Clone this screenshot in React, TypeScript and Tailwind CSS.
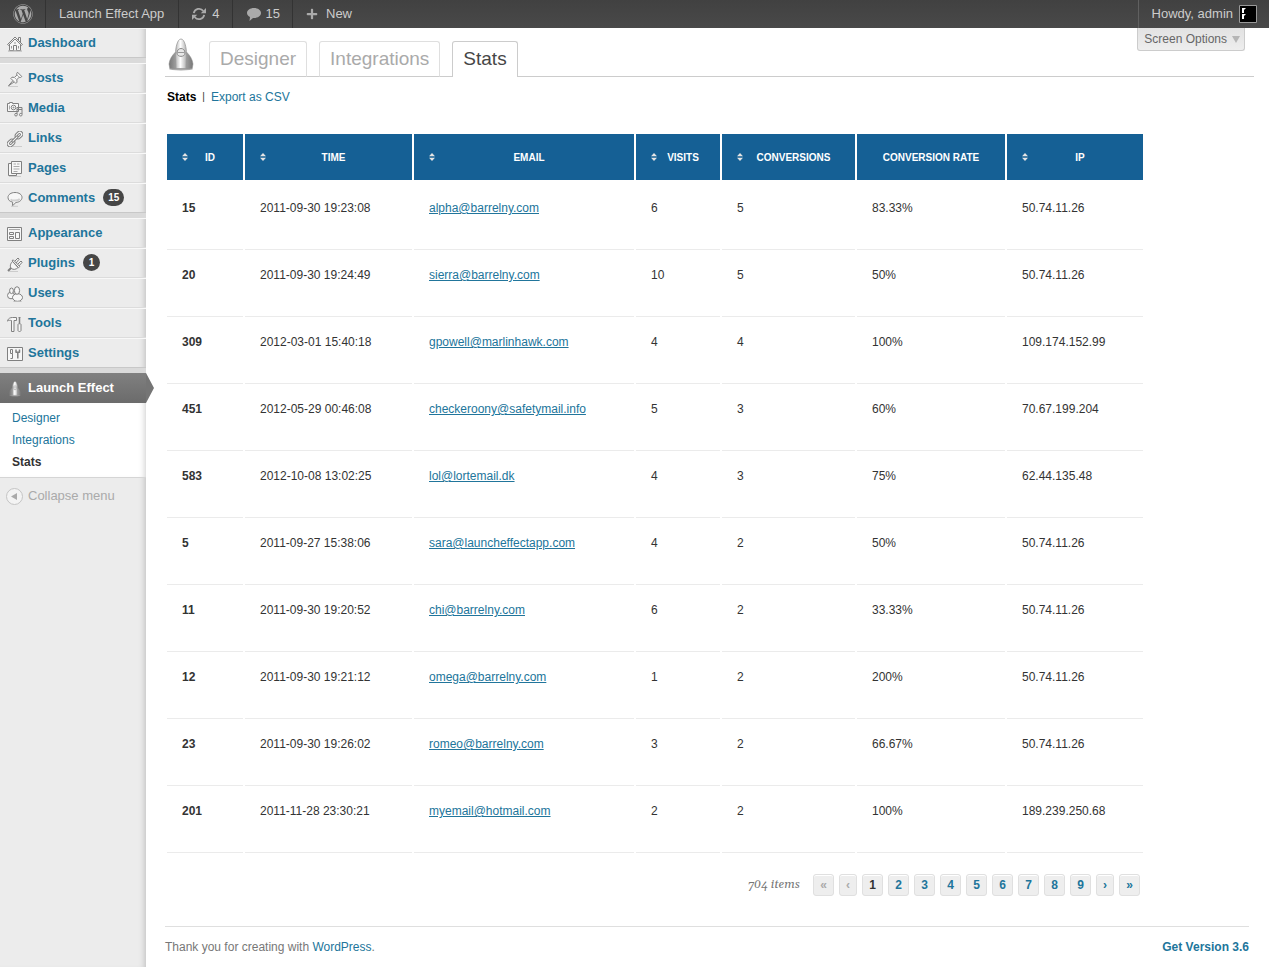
import React from "react";
import { FaWordpress, FaPlus } from "react-icons/fa";

type IconProps = { children: React.ReactNode };

function Glyph({ children }: IconProps) {
  return (
    <svg viewBox="0 0 16 16" className="size-4 shrink-0" fill="#f7f7f7" stroke="#808080" strokeWidth="1" strokeLinejoin="round" aria-hidden="true">
      {children}
    </svg>
  );
}

const icons = {
  dashboard: (
    <Glyph>
      <path d="M2.500 8v6.500h11V8L8 2.500z" />
      <path d="M11.500 4V1.500h2V6" />
      <path d="M.5 8.500 8 1l7.500 7.500-1 .8L8 3 1.500 9.300z" />
      <path d="M6.500 14.500v-5h3v5" />
      <path d="M4.500 10v2.500M11.500 10v2.500M7 7h2" stroke="#999" />
      <path d="M1 15h14" stroke="#aaa" />
    </Glyph>
  ),
  posts: (
    <Glyph>
      <path d="m6 9.500-4.500 5.300L7 11" />
      <path d="m10.500 1.200 4.300 4.300-1.300 1-1.500-.2-2.200 2.500.2 2.400-1.200 1.200-5-5 1.200-1.200 2.400.2 2.500-2.200-.2-1.500z" />
      <path d="m9.800 3.800 2.500 2.500M7.200 6.300l2.600 2.500" stroke="#aaa" />
      <path d="M1 15.500h10" stroke="#ccc" />
    </Glyph>
  ),
  media: (
    <Glyph>
      <path d="M.5 2.500h2v-1h3v1h6v8H.5z" />
      <circle cx="6.500" cy="6.500" r="2.300" />
      <circle cx="6.500" cy="6.500" r=".5" />
      <path d="M2.500 4.500v4" stroke="#aaa" />
      <path d="M10 13V6.500h5V13M10 8.500h5" fill="none" />
      <circle cx="9" cy="13.700" r="1.300" />
      <circle cx="13.800" cy="13.700" r="1.300" />
    </Glyph>
  ),
  links: (
    <Glyph>
      <g transform="rotate(-45 8 8)">
        <rect x="-1.800" y="5" width="8.300" height="6" rx="3" />
        <rect x=".6" y="7" width="3.500" height="2" rx="1" fill="#ececec" />
        <rect x="9.500" y="5" width="8.300" height="6" rx="3" />
        <rect x="11.900" y="7" width="3.500" height="2" rx="1" fill="#ececec" />
        <rect x="4" y="7" width="8" height="2" rx="1" />
      </g>
      <path d="M6 15.500h9" stroke="#ccc" />
    </Glyph>
  ),
  pages: (
    <Glyph>
      <path d="M1.500 2.500h8v12h-8z" />
      <path d="M4.500 .5h10v12h-10z" />
      <path d="M6.500 3h2.500M10 3h2.500M6.500 5.500h6M6.500 8h6M6.500 10.500h4" stroke="#aaa" />
      <path d="M2 15.500h12" stroke="#ccc" />
    </Glyph>
  ),
  comments: (
    <Glyph>
      <path d="M8 1.500c4.200 0 7 2.200 7 4.900 0 2.900-2.800 4.900-6 5L5.500 14.800l.2-3.700C2.700 10.600 1 8.900 1 6.400c0-2.700 2.800-4.900 7-4.900z" />
      <path d="M3.500 8.500c2 1.500 7 1.500 9.300-.5" stroke="#d0d0d0" fill="none" strokeWidth="2" />
      <path d="M4 15.300h7" stroke="#ccc" />
    </Glyph>
  ),
  appearance: (
    <Glyph>
      <path d="M.5 1.500h14v13H.5z" />
      <path d="M2 3.500h11" stroke="#aaa" />
      <path d="M2.500 6.500h4v2h-4zM2.500 10.500h4v2h-4zM8.500 6.500h4v6h-4z" />
    </Glyph>
  ),
  plugins: (
    <Glyph>
      <path d="M4.500 11.500 1 15" fill="none" strokeWidth="2" />
      <path d="M7.500 5.500 11 2l1.200 1.200L9 7zM10.500 8.500 14 5l1.200 1.200L12 10z" />
      <path d="M5.500 5.500 11 11.500c-2 2.200-5 2.500-6.700.8S3.300 7.700 5.500 5.500z" />
      <path d="m5 4.800 1.200-1 6.600 6.700-1.200 1.200z" />
      <path d="M2 15.500h9" stroke="#ccc" />
    </Glyph>
  ),
  users: (
    <Glyph>
      <ellipse cx="4" cy="9.500" rx="3.500" ry="3.300" />
      <ellipse cx="4.500" cy="4.800" rx="1.900" ry="2.800" />
      <ellipse cx="10.500" cy="11.500" rx="5" ry="3.800" />
      <ellipse cx="10" cy="4.500" rx="2.600" ry="3.800" />
      <path d="M6.500 15.500h8" stroke="#bbb" />
    </Glyph>
  ),
  tools: (
    <Glyph>
      <path d="M.5 4.500c1-2 2.500-3 5-3h4v3h-2.500v11H4.500v-11c-1.500-.3-3-.3-4 .6z" />
      <path d="M12.500 2v6" strokeWidth="1.500" />
      <path d="M11 8.500c0-1 3-1 3 0v6c0 1.300-3 1.300-3 0zM11.500 1.500h2" />
    </Glyph>
  ),
  settings: (
    <Glyph>
      <path d="M.5 1.500h15v13H.5z" />
      <path d="M3.500 3.500h2v4h-2zM3.500 12.500h2v-5" />
      <path d="M9 3.500v2.700h3.500V3.500M10.800 6.500v6" fill="none" strokeWidth="1.500" />
    </Glyph>
  ),
};

function Rocket({ className }: { className: string }) {
  return (
    <svg viewBox="0 0 26 34" className={className} aria-hidden="true">
      <defs>
        <linearGradient id="hull" x1="0" x2="1" y1="0" y2="0">
          <stop offset="0" stopColor="#b5b5b5" />
          <stop offset=".45" stopColor="#fff" />
          <stop offset="1" stopColor="#b0b0b0" />
        </linearGradient>
        <linearGradient id="fin" x1="0" x2="1" y1="0" y2="0">
          <stop offset="0" stopColor="#777" />
          <stop offset=".5" stopColor="#bbb" />
          <stop offset="1" stopColor="#777" />
        </linearGradient>
      </defs>
      <ellipse cx="13" cy="31" rx="12" ry="1.500" fill="#aaa" />
      <path d="M7.500 14C4.500 17 1.500 21 1 26l.8 4.500h6.700zM18.500 14c3 3 6 7 6.500 12l-.8 4.500h-6.700z" fill="url(#fin)" stroke="#888" strokeWidth=".5" />
      <path d="M13 1c3.700 0 5.500 9 5.500 15l-.5 14.500H8L7.500 16C7.500 10 9.300 1 13 1z" fill="url(#hull)" stroke="#999" strokeWidth=".8" />
      <path d="M9 15c0-6 8-6 8 0 0 4.500-8 4.500-8 0z" fill="#e8e8e8" stroke="#888" />
      <path d="M9.500 14.500h7" stroke="#999" />
    </svg>
  );
}

function Badge({ count }: { count: number }) {
  return (
    <span className="ml-[3px] flex h-[17px] min-w-[17px] items-center justify-center rounded-full bg-[#464646] px-[5px] text-[10px] font-bold text-white">
      {count}
    </span>
  );
}

type Entry = { icon: keyof typeof icons; label: string; count?: number };

const menuGroups: Entry[][] = [
  [{ icon: "dashboard", label: "Dashboard" }],
  [
    { icon: "posts", label: "Posts" },
    { icon: "media", label: "Media" },
    { icon: "links", label: "Links" },
    { icon: "pages", label: "Pages" },
    { icon: "comments", label: "Comments", count: 15 },
  ],
  [
    { icon: "appearance", label: "Appearance" },
    { icon: "plugins", label: "Plugins", count: 1 },
    { icon: "users", label: "Users" },
    { icon: "tools", label: "Tools" },
    { icon: "settings", label: "Settings" },
  ],
];

const rows = [
  ["15", "2011-09-30 19:23:08", "alpha@barrelny.com", "6", "5", "83.33%", "50.74.11.26"],
  ["20", "2011-09-30 19:24:49", "sierra@barrelny.com", "10", "5", "50%", "50.74.11.26"],
  ["309", "2012-03-01 15:40:18", "gpowell@marlinhawk.com", "4", "4", "100%", "109.174.152.99"],
  ["451", "2012-05-29 00:46:08", "checkeroony@safetymail.info", "5", "3", "60%", "70.67.199.204"],
  ["583", "2012-10-08 13:02:25", "lol@lortemail.dk", "4", "3", "75%", "62.44.135.48"],
  ["5", "2011-09-27 15:38:06", "sara@launcheffectapp.com", "4", "2", "50%", "50.74.11.26"],
  ["11", "2011-09-30 19:20:52", "chi@barrelny.com", "6", "2", "33.33%", "50.74.11.26"],
  ["12", "2011-09-30 19:21:12", "omega@barrelny.com", "1", "2", "200%", "50.74.11.26"],
  ["23", "2011-09-30 19:26:02", "romeo@barrelny.com", "3", "2", "66.67%", "50.74.11.26"],
  ["201", "2011-11-28 23:30:21", "myemail@hotmail.com", "2", "2", "100%", "189.239.250.68"],
];

const columns = [
  { label: "ID", width: "w-[76px]", sortable: true },
  { label: "TIME", width: "w-[167px]", sortable: true },
  { label: "EMAIL", width: "w-[220px]", sortable: true },
  { label: "VISITS", width: "w-[84px]", sortable: true },
  { label: "CONVERSIONS", width: "w-[133px]", sortable: true },
  { label: "CONVERSION RATE", width: "w-[148px]", sortable: false },
  { label: "IP", width: "w-[136px]", sortable: true },
];

const tabs = ["Designer", "Integrations", "Stats"];

function AdminBar() {
  return (
    <header className="flex h-7 items-stretch bg-linear-to-b from-[#414141] to-[#494949] text-[13px] text-[#ccc]">
      <a href="#about" aria-label="About WordPress" className="flex w-[46px] items-center justify-center border-r border-[#333]">
        <FaWordpress className="size-5 text-[#aaa]" />
      </a>
      <a href="#site" className="flex items-center border-r border-[#333] pr-3.5 pl-[13px]">Launch Effect App</a>
      <a href="#updates" className="flex items-center gap-[5px] border-r border-[#333] px-3">
        <svg viewBox="0 0 16 14" className="h-3.5 w-4" aria-hidden="true">
          <path d="M2.800 6.200A5.300 5.300 0 0 1 12.300 4M13.200 7.800A5.300 5.300 0 0 1 3.700 10" fill="none" stroke="#aaa" strokeWidth="1.800" />
          <path d="M15 1v5.200H9.800zM1 13V7.800h5.200z" fill="#aaa" />
        </svg>
        4
      </a>
      <a href="#comments" className="flex items-center gap-[5px] border-r border-[#333] pr-3 pl-3.5">
        <svg viewBox="0 0 14 13" className="h-[13px] w-3.5 fill-[#aaa]" aria-hidden="true">
          <path d="M7 0c4 0 7 2.200 7 5s-3 5-7 5l-1 0-3.500 3 .5-4C1.200 8 0 6.700 0 5c0-2.800 3-5 7-5z" />
        </svg>
        15
      </a>
      <a href="#new" className="flex items-center gap-2 px-[13px]">
        <FaPlus className="size-3 text-[#aaa]" />
        New
      </a>
      <a href="#profile" className="ml-auto flex items-center gap-1.5 border-l border-[#606060] pr-3 pl-[13px]">
        Howdy, admin
        <svg viewBox="0 0 18 18" className="size-[18px]" aria-hidden="true">
          <path d="M.5.500h17v17H.5z" fill="#000" stroke="#999" />
          <path d="M3 3h4L5 5v3H3zM3 9h4l-2 2v3H3z" fill="#fff" />
        </svg>
      </a>
    </header>
  );
}

function Sidebar() {
  return (
    <nav aria-label="Main menu" className="w-[146px] shrink-0 bg-[#ececec] shadow-[inset_-6px_0_6px_-5px_#bbb]">
      {menuGroups.map((group) => (
        <ul key={group[0].label} className="border-b-[5px] border-[#dadada]">
          {group.map((item) => (
            <li key={item.label} className="border-b border-[#dcdcdc] shadow-[inset_0_1px_0_#f8f8f8] last:border-[#c8c8c8]">
              <a href={"#" + item.icon} className="flex h-[29px] items-center gap-[5px] pl-[7px] text-[13px] font-bold text-[#21759b]">
                <span className="pt-0.5">{icons[item.icon]}</span>
                {item.label}
                {item.count && <Badge count={item.count} />}
              </a>
            </li>
          ))}
        </ul>
      ))}
      <a href="#launch" aria-current="true" className="relative flex h-[30px] items-center gap-[5px] bg-linear-to-b from-[#808080] to-[#6b6b6b] pl-[7px] text-[13px] font-bold text-white">
        <span className="pt-0.5"><Rocket className="size-4" /></span>
        Launch Effect
        <svg viewBox="0 0 8 30" className="absolute top-0 left-full h-[30px] w-2 fill-[#757575]" aria-hidden="true">
          <path d="M0 0 8 15 0 30z" />
        </svg>
      </a>
      <ul className="border-b border-[#d5d5d5] bg-white py-1 pl-3 text-xs leading-[22px] text-[#21759b] shadow-[inset_-6px_0_6px_-5px_#ccc]">
        <li><a href="#designer">Designer</a></li>
        <li><a href="#integrations">Integrations</a></li>
        <li><a href="#stats" className="font-bold text-[#333]">Stats</a></li>
      </ul>
      <button type="button" className="flex h-9 items-center gap-[5px] pl-1.5 text-[13px] text-[#aaa]">
        <svg viewBox="0 0 17 17" className="size-[17px]" aria-hidden="true">
          <circle cx="8.500" cy="8.500" r="8" fill="#f3f3f3" stroke="#c4c4c4" />
          <path d="M11 5v7L5 8.500z" fill="#aaa" />
        </svg>
        Collapse menu
      </button>
    </nav>
  );
}

function PageHeader() {
  return (
    <div className="flex h-[49px] items-end border-b border-[#ccc]">
      <Rocket className="mb-1 ml-[3px] h-[34px] w-[26px]" />
      <div className="ml-[15px] flex gap-3 text-[19px]">
        {tabs.map((tab) => (
          <a
            key={tab}
            href={"#" + tab}
            className={
              tab === "Stats"
                ? "-mb-px flex h-9 items-center rounded-t-[3px] border border-b-0 border-[#ccc] bg-white px-2.5 text-[#464646]"
                : "-mb-px flex h-9 items-center rounded-t-[3px] border border-[#dfdfdf] border-b-[#ccc] px-2.5 text-[#aaa]"
            }
          >
            {tab}
          </a>
        ))}
      </div>
      <button type="button" className="mr-[9px] ml-auto flex h-[23px] items-center gap-[5px] self-start rounded-b-[3px] border border-t-0 border-[#ccc] bg-linear-to-b from-[#e2e2e2] to-[#eee] pr-1 pl-1.5 text-xs text-[#666]">
        Screen Options
        <svg viewBox="0 0 8 7" className="h-[7px] w-2 fill-[#b5b5b5]" aria-hidden="true">
          <path d="M0 0h8L4 7z" />
        </svg>
      </button>
    </div>
  );
}

function StatsTable() {
  return (
    <table className="mt-[27px] w-full max-w-[980px] table-fixed border-separate border-spacing-0.5 text-left text-xs leading-4 text-[#333]">
      <thead>
        <tr>
          {columns.map((col) => (
            <th key={col.label} scope="col" className={col.width + " border-b-[3px] border-white bg-[#156095] p-0 text-[10px] font-bold text-white"}>
              {col.sortable ? (
                <button type="button" className="flex h-[46px] w-full items-center px-[15px]">
                  <svg viewBox="0 0 6 8" className="-mr-1 h-2 w-1.5 shrink-0 fill-[#e4e4e4]" aria-hidden="true">
                    <path d="M0 3.300 3 0l3 3.300zM0 4.700h6L3 8z" />
                  </svg>
                  <span className="flex-1 pt-px pl-2 text-center">{col.label}</span>
                </button>
              ) : (
                <span className="flex h-[46px] items-center justify-center pt-px whitespace-nowrap">{col.label}</span>
              )}
            </th>
          ))}
        </tr>
      </thead>
      <tbody>
        {rows.map((row) => (
          <tr key={row[0]}>
            {row.map((cell, i) => (
              <td key={columns[i].label} className="h-[65px] border-b border-[#ebebeb] px-[15px] pt-[15px] align-top">
                {i === 0 ? (
                  <strong>{cell}</strong>
                ) : i === 2 ? (
                  <a href={"mailto:" + cell} className="text-[#21759b] underline">{cell}</a>
                ) : (
                  cell
                )}
              </td>
            ))}
          </tr>
        ))}
      </tbody>
    </table>
  );
}

function Pager() {
  const pages = ["«", "‹", "1", "2", "3", "4", "5", "6", "7", "8", "9", "›", "»"];
  return (
    <div className="mt-[19px] flex max-w-[980px] items-center justify-end gap-[5px] pr-[5px] text-xs">
      <span className="mr-2 font-['Gelasio','Georgia','Liberation_Serif',serif] text-xs text-[#777] italic">704 items</span>
      {pages.map((page, i) => (
        <button
          key={page}
          type="button"
          disabled={i < 2}
          className={
            "flex h-[22px] items-center justify-center rounded-[3px] border border-[#e0e0e0] bg-[#eee] font-bold shadow-[inset_0_1px_0_#fff] " +
            (page === "‹" || page === "›" ? "w-[18px] " : "w-[21px] ") +
            (i < 2 ? "text-[#aaa]" : i === 2 ? "text-[#333]" : "text-[#21759b]")
          }
        >
          {page}
        </button>
      ))}
    </div>
  );
}

export default function App() {
  return (
    <div className="flex min-h-screen flex-col bg-white font-['Liberation_Sans',Arial,sans-serif] text-[#333]">
      <AdminBar />
      <div className="flex flex-1">
        <Sidebar />
        <main className="min-w-0 flex-1 pr-[15px] pl-[19px]">
          <PageHeader />
          <div className="mt-3 flex gap-1.5 pl-0.5 text-xs leading-4">
            <a href="#stats" className="font-bold text-black">Stats</a>
            <span className="text-[10px]">|</span>
            <a href="#export" className="text-[#21759b]">Export as CSV</a>
          </div>
          <StatsTable />
          <Pager />
          <footer className="mt-[30px] mr-[5px] flex justify-between border-t border-[#dfdfdf] pt-3 text-xs leading-4 text-[#777]">
            <p>
              Thank you for creating with <a href="#wordpress" className="text-[#21759b]">WordPress</a>.
            </p>
            <a href="#update" className="font-bold text-[#21759b]">Get Version 3.6</a>
          </footer>
        </main>
      </div>
    </div>
  );
}
